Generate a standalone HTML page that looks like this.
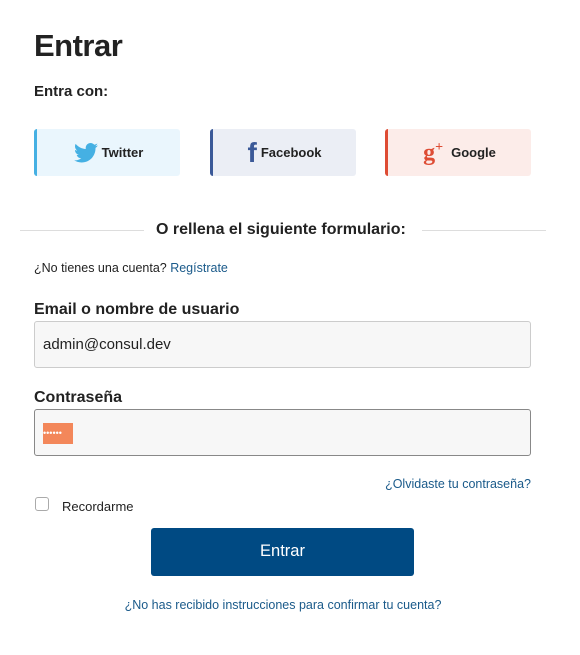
<!DOCTYPE html>
<html><head><meta charset="utf-8"><style>
body{margin:0;width:580px;height:655px;background:#fff;font-family:"Liberation Sans",sans-serif;color:#222;position:relative;overflow:hidden}
.a{position:absolute}
h1{position:absolute;left:34px;top:28px;margin:0;font-size:31px;font-weight:bold;color:#222;letter-spacing:-0.5px}
.btn{position:absolute;top:129px;height:47px;width:146px;box-sizing:border-box;border-radius:3px;font-size:13px;font-weight:bold;display:flex;align-items:center;justify-content:center;gap:4px;color:#222}
.lbl{position:absolute;left:34px;font-size:16px;font-weight:bold}
.inp{position:absolute;left:34px;width:497px;height:47px;border:1px solid #ccc;border-radius:3px;background:#f7f7f7;box-sizing:border-box}
a{color:#1a5a8a;text-decoration:none}
</style></head><body>
<h1>Entrar</h1>
<div class="a" style="left:34px;top:83px;font-size:15px;font-weight:bold">Entra con:</div>
<div class="btn" style="left:34px;background:#eaf6fd;border-left:3px solid #45b0e3">
<svg width="24" height="20" viewBox="0 0 24 20"><path d="M24 2.4c-.9.4-1.8.6-2.8.8 1-.6 1.8-1.6 2.2-2.7-1 .6-2 1-3.1 1.2C19.3.7 18 0 16.6 0c-2.7 0-4.9 2.2-4.9 4.9 0 .4 0 .8.1 1.1C7.7 5.8 4.1 3.9 1.7.9c-.4.7-.7 1.6-.7 2.5 0 1.7.9 3.2 2.2 4.1-.8 0-1.6-.2-2.2-.6v.1c0 2.4 1.7 4.4 3.9 4.8-.4.1-.8.2-1.3.2-.3 0-.6 0-.9-.1.6 2 2.4 3.4 4.6 3.4-1.7 1.3-3.8 2.1-6.1 2.1-.4 0-.8 0-1.2-.1 2.2 1.4 4.8 2.2 7.5 2.2 9.1 0 14-7.5 14-14v-.6c1-.7 1.8-1.6 2.5-2.5z" fill="#45b0e3"/></svg>Twitter</div>
<div class="btn" style="left:210px;background:#ebeef5;border-left:3px solid #3b5998">
<span style="font-family:'Liberation Sans',sans-serif;font-weight:bold;font-size:28px;color:#3b5998;line-height:1">f</span>Facebook</div>
<div class="btn" style="left:385px;background:#fcece9;border-left:3px solid #de4c34;gap:8px">
<span style="font-family:'Liberation Serif',serif;font-size:24px;color:#de4c34;line-height:1">g<sup style="font-size:14px">+</sup></span>Google</div>
<div class="a" style="left:20px;top:230px;width:124px;border-top:1px solid #ddd"></div>
<div class="a" style="left:422px;top:230px;width:124px;border-top:1px solid #ddd"></div>
<div class="a" style="left:156px;top:221px;font-size:16px;font-weight:bold">O rellena el siguiente formulario:</div>
<div class="a" style="left:34px;top:261px;font-size:12.5px">¿No tienes una cuenta? <a>Regístrate</a></div>
<div class="lbl" style="top:301px">Email o nombre de usuario</div>
<div class="inp" style="top:321px;padding:14px 8px;font-size:15px">admin@consul.dev</div>
<div class="lbl" style="top:389px">Contraseña</div>
<div class="inp" style="top:409px;border-color:#888"><div class="a" style="left:8px;top:13px;width:30px;height:21px;background:#f3875a;color:#fff;font-size:9px;line-height:21px;letter-spacing:0;overflow:hidden;white-space:nowrap">••••••</div></div>
<div class="a" style="right:49px;top:477px;font-size:12.5px"><a>¿Olvidaste tu contraseña?</a></div>
<div class="a" style="left:35px;top:497px;width:12px;height:12px;border:1px solid #aaa;border-radius:3px"></div>
<div class="a" style="left:62px;top:499px;font-size:13px">Recordarme</div>
<div class="a" style="left:151px;top:528px;width:263px;height:48px;background:#004a83;border-radius:3px;color:#fff;font-size:16.5px;text-align:center;line-height:46px">Entrar</div>
<div class="a" style="left:0;width:566px;text-align:center;top:598px;font-size:12.5px"><a>¿No has recibido instrucciones para confirmar tu cuenta?</a></div>
</body></html>
